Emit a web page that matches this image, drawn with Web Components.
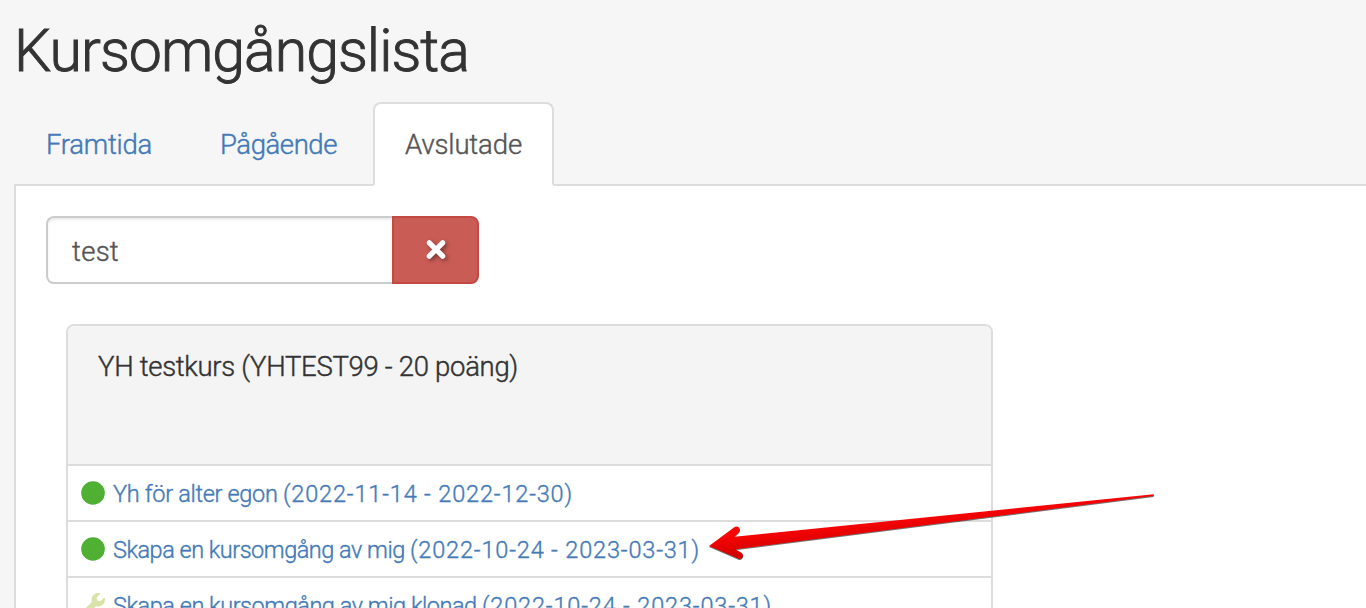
<!DOCTYPE html>
<html lang="sv">
<head>
<meta charset="utf-8">
<title>Kursomgångslista</title>
<style>
  body {
    margin: 0;
    height: 608px;
    overflow: hidden;
    background: #f6f6f6;
    color: #333;
    font: 300 27.5px/40px Roboto, "Open Sans", sans-serif;
  }
</style>
</head>
<body>
<course-page>
  <fit-text slot="title" width="455">Kursomgångslista</fit-text>
  <nav-tab slot="tabs"><fit-text width="106">Framtida</fit-text></nav-tab>
  <nav-tab slot="tabs"><fit-text width="117">Pågående</fit-text></nav-tab>
  <nav-tab slot="tabs" active><fit-text width="117">Avslutade</fit-text></nav-tab>
  <search-field><fit-text width="47">test</fit-text></search-field>
  <course-panel>
    <fit-text slot="heading" width="420">YH testkurs (YHTEST99 - 20 poäng)</fit-text>
    <course-row status="done"><fit-text width="170">Yh för alter egon&nbsp;</fit-text><fit-text width="290">(2022-11-14 - 2022-12-30)</fit-text></course-row>
    <course-row status="done"><fit-text width="297">Skapa en kursomgång av mig&nbsp;</fit-text><fit-text width="290">(2022-10-24 - 2023-03-31)</fit-text></course-row>
    <course-row status="wrench"><fit-text width="369">Skapa en kursomgång av mig klonad&nbsp;</fit-text><fit-text width="290">(2022-10-24 - 2023-03-31)</fit-text></course-row>
  </course-panel>
</course-page>
<pointer-arrow></pointer-arrow>

<script>
// Attach an open shadow root with the given markup
const shadow = (el, html) => {
  el.attachShadow({ mode: "open" }).innerHTML = html;
};

// Text that is tracked to fill exactly the given width
class FitText extends HTMLElement {
  constructor() {
    super();
    shadow(this, `
      <style>
        :host { display: inline-block; white-space: nowrap; }
        /* A thin stroke gives a weight between light and regular */
        span { display: inline-block; -webkit-text-stroke: 0.016em currentColor; }
      </style>
      <span><slot></slot></span>`);
  }

  connectedCallback() {
    const width = Number(this.getAttribute("width"));
    const span = this.shadowRoot.querySelector("span");
    const natural = span.getBoundingClientRect().width;
    span.style.letterSpacing = (width - natural) / this.textContent.length + "px";
    this.style.width = width + "px";
  }
}

class CoursePage extends HTMLElement {
  constructor() {
    super();
    shadow(this, `
      <style>
        :host {
          display: flex;
          flex-direction: column;
          box-sizing: border-box;
          height: 608px;
          padding: 18px 0 0 14px;
        }
        h1 { margin: 0 0 18px; font-size: 59px; font-weight: inherit; line-height: 66px; }
        nav { display: flex; gap: 4px; margin-bottom: -2px; }
        main {
          flex: 1;
          min-height: 0;
          padding: 30px 30px 0;
          border: 2px solid #ddd;
          border-width: 2px 0 0 2px;
          background: #fff;
          overflow: hidden;
        }
      </style>
      <h1><slot name="title"></slot></h1>
      <nav><slot name="tabs"></slot></nav>
      <main><slot></slot></main>`);
  }
}

class NavTab extends HTMLElement {
  constructor() {
    super();
    shadow(this, `
      <style>
        :host {
          display: block;
          position: relative;
          height: 40px;
          padding: 21px 30px 19px;
          border: 2px solid transparent;
          color: #447ab7;
        }
        :host([active]) {
          border-color: #ddd;
          border-bottom-color: #fff;
          border-radius: 8px 8px 0 0;
          background: #fff;
          color: #555;
        }
      </style>
      <slot></slot>`);
  }
}

class SearchField extends HTMLElement {
  constructor() {
    super();
    shadow(this, `
      <style>
        :host { display: flex; height: 68px; }
        .input {
          box-sizing: border-box;
          width: 346px;
          padding: 14px 24px 10px;
          border: 2px solid #ccc;
          border-right: 0;
          border-radius: 8px 0 0 8px;
          box-shadow: inset 0 2px 2px rgba(0, 0, 0, 0.075);
          color: #555;
        }
        button {
          display: flex;
          align-items: center;
          justify-content: center;
          width: 87px;
          padding: 0;
          border: 2px solid #c34a43;
          border-radius: 0 8px 8px 0;
          background: #c95c55;
        }
        svg { filter: drop-shadow(2px 2px 2px rgba(0, 0, 0, 0.4)); }
      </style>
      <div class="input"><slot></slot></div>
      <button aria-label="Rensa">
        <svg width="28" height="28" viewBox="0 0 28 28">
          <path d="M7.3 6.8 20.7 20.2M20.7 6.8 7.3 20.2" stroke="#fff" stroke-width="5.2" stroke-linecap="round"/>
        </svg>
      </button>`);
  }
}

class CoursePanel extends HTMLElement {
  constructor() {
    super();
    shadow(this, `
      <style>
        :host {
          display: block;
          width: 923px;
          margin: 40px 0 0 20px;
          border: 2px solid #ddd;
          border-radius: 8px;
          overflow: hidden;
        }
        header { height: 97px; padding: 21px 30px 20px; background: #f4f4f4; }
      </style>
      <header><slot name="heading"></slot></header>
      <slot></slot>`);
  }
}

const icons = {
  done: `<circle cx="12" cy="12" r="11.8" fill="#50b033"/>`,
  wrench: `<path fill="#d9e2ab" transform="scale(.046875)" d="M507.73 109.1c-2.24-9.03-13.54-12.09-20.12-5.51l-74.36 74.36-67.88-11.31-11.31-67.88 74.36-74.36c6.62-6.62 3.43-17.9-5.66-20.16-47.38-11.74-99.55.91-136.58 37.93-39.64 39.64-50.55 97.1-34.05 147.2L18.74 402.76c-24.99 24.99-24.99 65.51 0 90.5s65.51 24.99 90.5 0l213.21-213.21c50.12 16.71 107.47 5.68 147.37-34.22 37.07-37.07 49.7-89.32 37.91-136.73z"/>`
};

class CourseRow extends HTMLElement {
  constructor() {
    super();
    shadow(this, `
      <style>
        :host {
          display: flex;
          align-items: center;
          height: 54px;
          padding-left: 13px;
          border-top: 2px solid #ddd;
          background: #fff;
          color: #447ab7;
          font-size: 23.5px;
        }
        svg { flex: none; margin-right: 8px; }
        a { display: flex; padding-top: 2px; }
      </style>
      <svg width="24" height="24" viewBox="0 0 24 24">${icons[this.getAttribute("status")]}</svg>
      <a><slot></slot></a>`);
  }
}

// Red arrow laid over the page
class PointerArrow extends HTMLElement {
  constructor() {
    super();
    shadow(this, `
      <style>
        :host { position: absolute; left: 700px; top: 480px; }
        svg { display: block; filter: drop-shadow(0 1px 0.6px rgba(0, 0, 0, 0.55)); }
      </style>
      <svg width="470" height="100" viewBox="0 0 470 100">
        <defs>
          <linearGradient id="red" gradientUnits="userSpaceOnUse" x1="200" y1="38" x2="201.8" y2="56">
            <stop offset="0" stop-color="#fa0505"/>
            <stop offset="1" stop-color="#d60000"/>
          </linearGradient>
        </defs>
        <path fill="url(#red)" d="M9 66 34.3 47.3C38 45 41.5 49 39 52.3L34.3 56.8 453.7 14.2V16L35.5 69.3 41 72.5C45 75 42.5 80 38.5 78.8Z"/>
      </svg>`);
  }
}

customElements.define("course-page", CoursePage);
customElements.define("nav-tab", NavTab);
customElements.define("search-field", SearchField);
customElements.define("course-panel", CoursePanel);
customElements.define("course-row", CourseRow);
customElements.define("pointer-arrow", PointerArrow);
customElements.define("fit-text", FitText);
</script>
</body>
</html>
